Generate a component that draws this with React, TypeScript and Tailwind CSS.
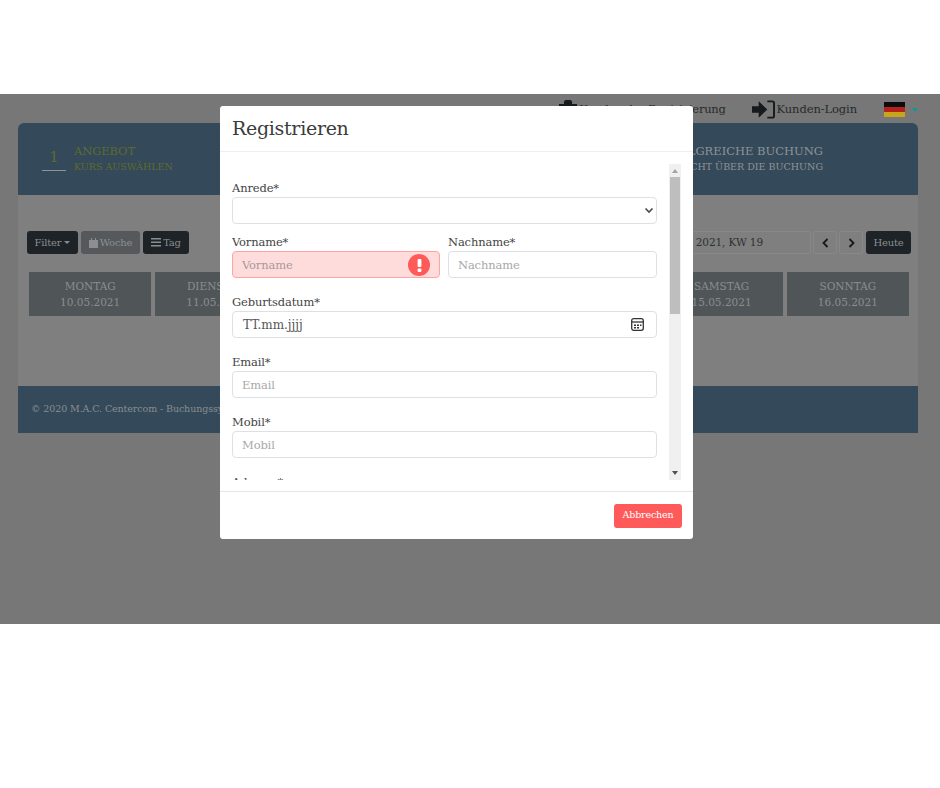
import React from "react";

const F = "[font-family:'DejaVu_Serif',serif]";
const L = "block h-[18px] text-[11.5px] leading-[18px] tracking-[-0.15px] text-[#444444]";

function Field({ label, placeholder, error }: { label: string; placeholder: string; error?: boolean }) {
  return (
    <div className="min-w-0">
      <label className={L}>{label}</label>
      <div className="relative">
        <input
          readOnly
          placeholder={placeholder}
          className={
            "block w-full h-[27px] rounded-[4px] border px-[9px] text-[11.5px] tracking-[-0.15px] outline-none " +
            (error
              ? "border-[#ffa3a3] bg-[#ffdcdc] placeholder:text-[#a69a9a]"
              : "border-[#dfe0e6] bg-white placeholder:text-[#a8a8a8]")
          }
        />
        {error && (
          <span className="absolute right-[10px] top-[3px] flex h-[22px] w-[22px] items-center justify-center rounded-full bg-[#ff5a5a]">
            <svg width="5" height="13" viewBox="0 0 5 13"><rect x="0.6" y="0" width="3.8" height="8" rx="1" fill="#fff" /><rect x="0.6" y="9.500" width="3.8" height="3.500" rx="1" fill="#fff" /></svg>
          </span>
        )}
      </div>
    </div>
  );
}

function Day({ name, date }: { name: string; date: string }) {
  return (
    <div className="flex h-[44px] flex-1 flex-col items-center justify-center bg-[#505557] text-[10.5px] leading-[16px] text-[#8a8e90]">
      <span>{name}</span>
      <span>{date}</span>
    </div>
  );
}

function DarkBtn({ children, muted, w }: { children: React.ReactNode; muted?: boolean; w: string }) {
  return (
    <button className={"flex h-[23px] items-center justify-center gap-[2px] rounded-[3px] text-[10px] tracking-[-0.2px] " + w + " " + (muted ? "bg-[#55595c] text-[#8c8f91]" : "bg-[#1d2327] text-[#8a8d8f]")}>
      {children}
    </button>
  );
}

export default function App() {
  return (
    <div className={"h-[788px] w-[940px] overflow-hidden bg-white " + F}>
      <div className="h-[94px]" />
      <section className="relative h-[530px] overflow-hidden bg-[#767776]">
        {/* background page */}
        <div className="flex h-[29px] items-center justify-end pr-[22px] pt-[2px] text-[11.5px] text-[#262a2c]">
          <span className="flex items-center gap-[2px]">
            <svg width="18" height="22" viewBox="0 0 18 22" className="mt-[3px]"><path d="M0 4h5V2a2 2 0 0 1 2-2h4a2 2 0 0 1 2 2v2h5v18H0z" fill="#161a1c" /></svg>
            <span className="tracking-[-0.25px]">Kunden der Registrierung</span>
          </span>
          <span className="ml-[26px] flex items-center gap-[2px]">
            <svg width="23" height="19" viewBox="0 0 24 19"><path d="M0 6h7V1l9 8.500-9 8.500v-5H0z" fill="#161a1c" /><path d="M16 1h5a2 2 0 0 1 2 2v13a2 2 0 0 1-2 2h-5" fill="none" stroke="#161a1c" strokeWidth="2" /></svg>
            <span className="tracking-[-0.1px]">Kunden-Login</span>
          </span>
          <span className="ml-[27px] flex h-[16px] w-[21px] flex-col">
            <span className="flex-1 bg-[#0c0c0c]" />
            <span className="flex-1 bg-[#b3211c]" />
            <span className="flex-1 bg-[#c9a51c]" />
          </span>
          <span className="ml-[7px] h-0 w-0 border-x-[3px] border-t-[4px] border-x-transparent border-t-[#0f9a94]" />
        </div>
        <div className="mx-[18px] w-[900px]">
          <div className="flex h-[72px] rounded-t-[6px] bg-[#34495a]">
            <div className="flex items-center pl-[24px]">
              <span className="mr-[8px] w-[24px] border-b border-[#8f9496] pb-[3px] text-center text-[15px] leading-[20px] text-[#5f6b2c]">1</span>
              <div>
                <div className="text-[11.5px] leading-[16px] tracking-[-0.1px] text-[#5f6b2c]">ANGEBOT</div>
                <div className="text-[9.5px] leading-[16px] text-[#5f6b2c]">KURS AUSWÄHLEN</div>
              </div>
            </div>
            <div className="ml-auto flex flex-col justify-center pr-[95px] text-right text-[#8f9496]">
              <div className="text-[11.5px] leading-[16px]">ERFOLGREICHE BUCHUNG</div>
              <div className="text-[9.5px] leading-[16px]">ÜBERSICHT ÜBER DIE BUCHUNG</div>
            </div>
          </div>
          <div className="h-[191px] bg-[#7f7f7f] pl-[11px] pr-[9px] pt-[36px]">
            <div className="flex h-[23px] items-center">
              <div className="ml-[-2px] flex gap-[3px]">
                <DarkBtn w="w-[51px]">Filter<span className="ml-[1px] h-0 w-0 border-x-[3px] border-t-[3px] border-x-transparent border-t-[#8a8d8f]" /></DarkBtn>
                <DarkBtn muted w="w-[59px]">
                  <svg width="9" height="10" viewBox="0 0 9 10"><path d="M0 2h9v8H0zM2 0h1v2H2zM6 0h1v2H6z" fill="#8c8f91" /></svg>
                  Woche
                </DarkBtn>
                <DarkBtn w="w-[46px]">
                  <svg width="10" height="9" viewBox="0 0 10 9"><path d="M0 0h10v1.500H0zM0 3.500h10v1.500H0zM0 7h10v1.500H0z" fill="#8a8d8f" /></svg>
                  Tag
                </DarkBtn>
              </div>
              <div className="ml-auto mr-[-2px] flex items-center">
                <div className="flex h-[23px] w-[163px] items-center justify-end rounded-[2px] border border-[#888888] pr-[47px] text-[10.5px] tracking-[-0.1px] text-[#2d3133]">May 2021, KW 19</div>
                <button className="ml-[2px] flex h-[23px] w-[24px] items-center justify-center rounded-[3px] border border-[#888888]"><svg width="7" height="10" viewBox="0 0 7 10"><path d="M5.500 1 1.500 5l4 4" fill="none" stroke="#161a1c" strokeWidth="1.800" /></svg></button>
                <button className="ml-[2px] flex h-[23px] w-[24px] items-center justify-center rounded-[3px] border border-[#888888]"><svg width="7" height="10" viewBox="0 0 7 10"><path d="M1.500 1l4 4-4 4" fill="none" stroke="#161a1c" strokeWidth="1.800" /></svg></button>
                <div className="ml-[3px]"><DarkBtn w="w-[45px]">Heute</DarkBtn></div>
              </div>
            </div>
            <div className="mt-[18px] flex gap-[4px]">
              <Day name="MONTAG" date="10.05.2021" />
              <Day name="DIENSTAG" date="11.05.2021" />
              <Day name="MITTWOCH" date="12.05.2021" />
              <Day name="DONNERSTAG" date="13.05.2021" />
              <Day name="FREITAG" date="14.05.2021" />
              <Day name="SAMSTAG" date="15.05.2021" />
              <Day name="SONNTAG" date="16.05.2021" />
            </div>
          </div>
          <div className="flex h-[47px] items-center bg-[#34495a] pl-[13px] text-[9.5px] tracking-[-0.1px] text-[#8a8e90]">© 2020 M.A.C. Centercom - Buchungssystem</div>
        </div>

        {/* modal */}
        <div className="absolute left-[220px] top-[12px] flex h-[433px] w-[473px] flex-col rounded-[3px] bg-white text-[#4a4a4a]">
          <div className="flex h-[46px] shrink-0 items-center border-b border-[#eeeeee] px-[12px] text-[19px] tracking-[-0.3px] text-[#3c3c3c]">Registrieren</div>
          <div className="flex min-h-0 flex-1 flex-col border-b border-[#e5e5e5] px-[12px] pt-[12px]">
            <div className="flex h-[316px] gap-[12px]">
              <div className="min-w-0 flex-1 overflow-hidden pt-[15px]">
                <div className="flex flex-col gap-[15px]">
                  <div className="-mb-[6px]">
                    <label className={L}>Anrede*</label>
                    <div className="relative h-[27px] rounded-[4px] border border-[#dfe0e6] bg-white">
                      <svg className="absolute right-[2px] top-[9px]" width="10" height="7" viewBox="0 0 10 7"><path d="M1.500 1.500 5 5l3.500-3.500" fill="none" stroke="#4a4a4a" strokeWidth="1.600" /></svg>
                    </div>
                  </div>
                  <div className="grid grid-cols-[208px_1fr] gap-[8px]">
                    <Field label="Vorname*" placeholder="Vorname" error />
                    <Field label="Nachname*" placeholder="Nachname" />
                  </div>
                  <div>
                    <label className={L}>Geburtsdatum*</label>
                    <div className="relative flex h-[27px] items-center rounded-[4px] border border-[#dfe0e6] bg-white pl-[10px] text-[12px] text-[#555555]">
                      TT.mm.jjjj
                      <svg className="absolute right-[12px] top-[6px]" width="13" height="13" viewBox="0 0 13 13"><rect x="0.700" y="0.700" width="11.600" height="11.600" rx="2" fill="none" stroke="#333" strokeWidth="1.300" /><path d="M1 4h11" stroke="#333" strokeWidth="1.300" /><path d="M3 6.500h2v1.500H3zM6 6.500h2v1.500H6zM9 6.500h1.500v1.500H9zM3 9h2v1.500H3zM6 9h2v1.500H6z" fill="#333" /></svg>
                    </div>
                  </div>
                  <Field label="Email*" placeholder="Email" />
                  <Field label="Mobil*" placeholder="Mobil" />
                  <Field label="Adresse*" placeholder="" />
                </div>
              </div>
              <div className="flex w-[12px] shrink-0 flex-col items-center bg-[#f0f0f0]">
                <span className="mt-[5px] h-0 w-0 border-x-[3.5px] border-b-[4px] border-x-transparent border-b-[#a3a3a3]" />
                <span className="mt-[4px] h-[137px] w-[10px] bg-[#bebebe]" />
                <span className="mt-auto mb-[5px] h-0 w-0 border-x-[3.5px] border-t-[4px] border-x-transparent border-t-[#505050]" />
              </div>
            </div>
          </div>
          <div className="flex h-[47px] shrink-0 items-center justify-end pl-[12px] pr-[11px]">
            <button className="h-[24px] w-[68px] rounded-[3px] bg-[#ff5a5a] text-[9.5px] tracking-[-0.15px] text-white">Abbrechen</button>
          </div>
        </div>
      </section>
    </div>
  );
}
